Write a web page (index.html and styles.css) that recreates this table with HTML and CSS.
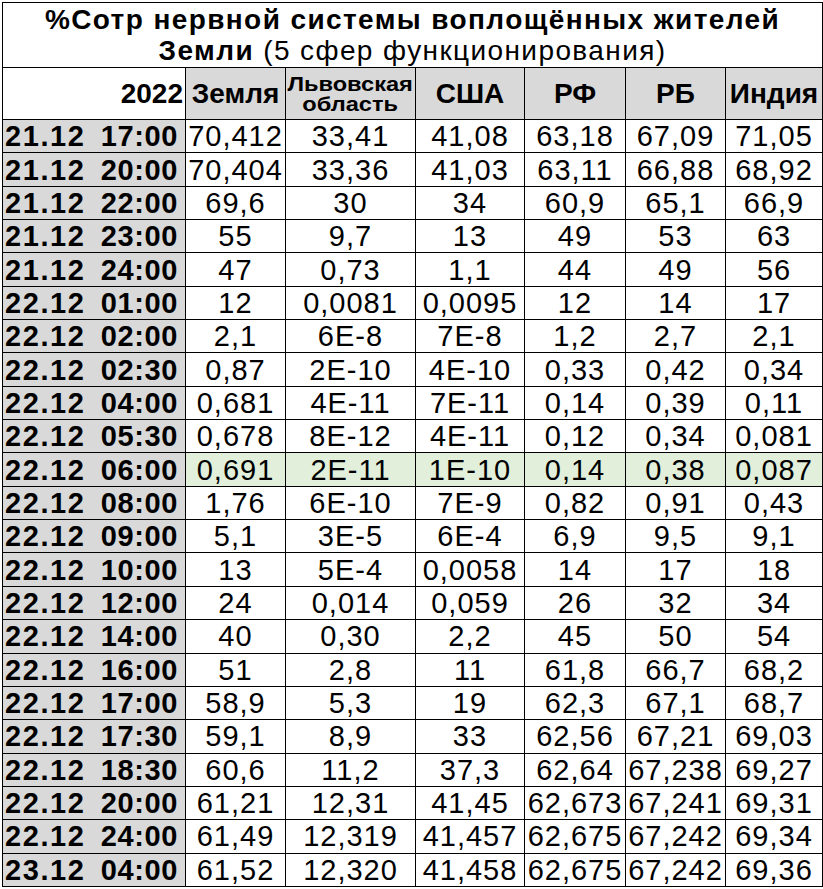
FILE: index.html
```html
<!DOCTYPE html>
<html lang="ru">
<head>
<meta charset="utf-8">
<title>%Сотр нервной системы</title>
<link rel="stylesheet" href="styles.css">
</head>
<body>
<div class="page">
<table class="sheet">
  <colgroup>
    <col class="c-time"><col class="c-earth"><col class="c-lviv"><col class="c-usa"><col class="c-rf"><col class="c-rb"><col class="c-ind">
  </colgroup>
  <tr class="title-row">
    <td colspan="7" class="title"><b>%Сотр нервной системы воплощённых жителей</b><br><b>Земли</b> (5 сфер функционирования)</td>
  </tr>
  <tr class="head-row">
    <td class="year">2022</td>
    <td class="hd">Земля</td>
    <td class="hd small"><span class="stretch">Львовская<br>область</span></td>
    <td class="hd">США</td>
    <td class="hd">РФ</td>
    <td class="hd">РБ</td>
    <td class="hd">Индия</td>
  </tr>
  <tr><td class="when"><span>21.12</span><span>17:00</span></td><td>70,412</td><td>33,41</td><td>41,08</td><td>63,18</td><td>67,09</td><td>71,05</td></tr>
  <tr><td class="when"><span>21.12</span><span>20:00</span></td><td>70,404</td><td>33,36</td><td>41,03</td><td>63,11</td><td>66,88</td><td>68,92</td></tr>
  <tr><td class="when"><span>21.12</span><span>22:00</span></td><td>69,6</td><td>30</td><td>34</td><td>60,9</td><td>65,1</td><td>66,9</td></tr>
  <tr><td class="when"><span>21.12</span><span>23:00</span></td><td>55</td><td>9,7</td><td>13</td><td>49</td><td>53</td><td>63</td></tr>
  <tr><td class="when"><span>21.12</span><span>24:00</span></td><td>47</td><td>0,73</td><td>1,1</td><td>44</td><td>49</td><td>56</td></tr>
  <tr><td class="when"><span>22.12</span><span>01:00</span></td><td>12</td><td>0,0081</td><td>0,0095</td><td>12</td><td>14</td><td>17</td></tr>
  <tr><td class="when"><span>22.12</span><span>02:00</span></td><td>2,1</td><td>6E-8</td><td>7E-8</td><td>1,2</td><td>2,7</td><td>2,1</td></tr>
  <tr><td class="when"><span>22.12</span><span>02:30</span></td><td>0,87</td><td>2E-10</td><td>4E-10</td><td>0,33</td><td>0,42</td><td>0,34</td></tr>
  <tr><td class="when"><span>22.12</span><span>04:00</span></td><td>0,681</td><td>4E-11</td><td>7E-11</td><td>0,14</td><td>0,39</td><td>0,11</td></tr>
  <tr><td class="when"><span>22.12</span><span>05:30</span></td><td>0,678</td><td>8E-12</td><td>4E-11</td><td>0,12</td><td>0,34</td><td>0,081</td></tr>
  <tr class="hl"><td class="when"><span>22.12</span><span>06:00</span></td><td>0,691</td><td>2E-11</td><td>1E-10</td><td>0,14</td><td>0,38</td><td>0,087</td></tr>
  <tr><td class="when"><span>22.12</span><span>08:00</span></td><td>1,76</td><td>6E-10</td><td>7E-9</td><td>0,82</td><td>0,91</td><td>0,43</td></tr>
  <tr><td class="when"><span>22.12</span><span>09:00</span></td><td>5,1</td><td>3E-5</td><td>6E-4</td><td>6,9</td><td>9,5</td><td>9,1</td></tr>
  <tr><td class="when"><span>22.12</span><span>10:00</span></td><td>13</td><td>5E-4</td><td>0,0058</td><td>14</td><td>17</td><td>18</td></tr>
  <tr><td class="when"><span>22.12</span><span>12:00</span></td><td>24</td><td>0,014</td><td>0,059</td><td>26</td><td>32</td><td>34</td></tr>
  <tr><td class="when"><span>22.12</span><span>14:00</span></td><td>40</td><td>0,30</td><td>2,2</td><td>45</td><td>50</td><td>54</td></tr>
  <tr><td class="when"><span>22.12</span><span>16:00</span></td><td>51</td><td>2,8</td><td>11</td><td>61,8</td><td>66,7</td><td>68,2</td></tr>
  <tr><td class="when"><span>22.12</span><span>17:00</span></td><td>58,9</td><td>5,3</td><td>19</td><td>62,3</td><td>67,1</td><td>68,7</td></tr>
  <tr><td class="when"><span>22.12</span><span>17:30</span></td><td>59,1</td><td>8,9</td><td>33</td><td>62,56</td><td>67,21</td><td>69,03</td></tr>
  <tr><td class="when"><span>22.12</span><span>18:30</span></td><td>60,6</td><td>11,2</td><td>37,3</td><td>62,64</td><td>67,238</td><td>69,27</td></tr>
  <tr><td class="when"><span>22.12</span><span>20:00</span></td><td>61,21</td><td>12,31</td><td>41,45</td><td>62,673</td><td>67,241</td><td>69,31</td></tr>
  <tr><td class="when"><span>22.12</span><span>24:00</span></td><td>61,49</td><td>12,319</td><td>41,457</td><td>62,675</td><td>67,242</td><td>69,34</td></tr>
  <tr><td class="when"><span>23.12</span><span>04:00</span></td><td>61,52</td><td>12,320</td><td>41,458</td><td>62,675</td><td>67,242</td><td>69,36</td></tr>
</table>
</div>
</body>
</html>
```
FILE: styles.css
```css
html, body {
  margin: 0;
  padding: 0;
  background: #ffffff;
}
.page {
  padding: 2px 0 0 2px;
}
.sheet {
  border-collapse: collapse;
  table-layout: fixed;
  width: 820px;
  font-family: "Liberation Sans", Arial, sans-serif;
  color: #000;
}
.c-time { width: 183px; }
.c-earth { width: 100px; }
.c-lviv { width: 130px; }
.c-usa { width: 109px; }
.c-rf { width: 101px; }
.c-rb { width: 100px; }
.c-ind { width: 97px; }
.sheet td {
  border: 1px solid #000;
  padding: 0;
  height: 32.35px;
  text-align: center;
  vertical-align: middle;
  font-size: 29px;
  line-height: 30px;
  letter-spacing: 1px;
  white-space: nowrap;
  overflow: visible;
}
.sheet td.title {
  height: 63px;
  font-size: 28px;
  line-height: 31px;
  letter-spacing: 1.4px;
  vertical-align: top;
  padding-top: 1px;
}
.head-row td {
  height: 51px;
  background: #d9d9d9;
  font-weight: bold;
  font-size: 28px;
  letter-spacing: 0;
}
.head-row td.year {
  background: #fff;
  text-align: right;
  padding-right: 2px;
}
.head-row td.small {
  font-size: 20px;
  line-height: 20px;
}
.stretch {
  display: inline-block;
  transform: scaleX(1.18);
}
.sheet td.when {
  background: #d9d9d9;
  font-weight: bold;
  text-align: left;
  letter-spacing: 0.6px;
}
.when span:first-child {
  float: left;
  padding-left: 2px;
  letter-spacing: 1.6px;
}
.when span:last-child {
  float: right;
  padding-right: 7px;
}
.hl td {
  background: #e2efda;
}
.hl td.when {
  background: #d9d9d9;
}
```
